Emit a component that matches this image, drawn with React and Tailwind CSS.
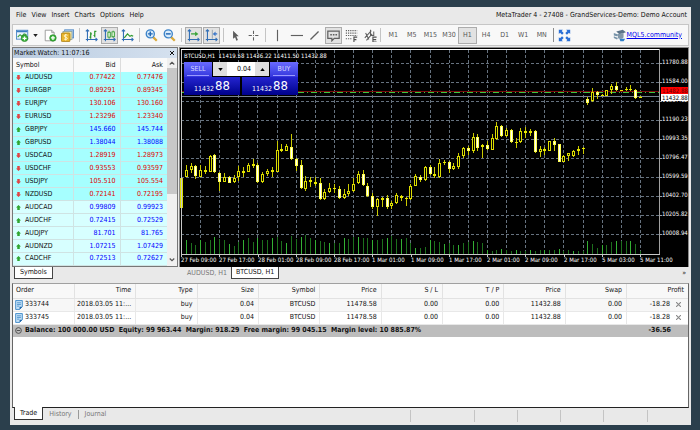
import React, { useState } from 'react';

const menuItems = ['File', 'View', 'Insert', 'Charts', 'Options', 'Help'];
const timeframes = ['M1', 'M5', 'M15', 'M30', 'H1', 'H4', 'D1', 'W1', 'MN'];

// symbol, bid, ask, direction
const quotes = [
  ['AUDUSD', '0.77422', '0.77476', 'down'],
  ['EURGBP', '0.89291', '0.89345', 'down'],
  ['EURJPY', '130.106', '130.160', 'down'],
  ['EURUSD', '1.23296', '1.23340', 'down'],
  ['GBPJPY', '145.660', '145.744', 'up'],
  ['GBPUSD', '1.38044', '1.38088', 'up'],
  ['USDCAD', '1.28919', '1.28973', 'down'],
  ['USDCHF', '0.93553', '0.93597', 'down'],
  ['USDJPY', '105.510', '105.554', 'down'],
  ['NZDUSD', '0.72141', '0.72195', 'down'],
  ['AUDCAD', '0.99809', '0.99923', 'up'],
  ['AUDCHF', '0.72415', '0.72529', 'up'],
  ['AUDJPY', '81.701', '81.765', 'up'],
  ['AUDNZD', '1.07215', '1.07429', 'up'],
  ['CADCHF', '0.72513', '0.72627', 'up'],
];

const orderColumns = ['Order', 'Time', 'Type', 'Size', 'Symbol', 'Price', 'S / L', 'T / P', 'Price', 'Swap', 'Profit'];
const orders = [
  ['333744', '2018.03.05 11:...', 'buy', '0.04', 'BTCUSD', '11478.58', '0.00', '0.00', '11432.88', '0.00', '-18.28'],
  ['333745', '2018.03.05 11:...', 'buy', '0.04', 'BTCUSD', '11478.58', '0.00', '0.00', '11432.88', '0.00', '-18.28'],
];

// high, body top, body bottom, low, 1 = rising
const candles = [
  [178, 178, 208, 208, 1], [165, 170, 177, 177, 1], [163, 166, 170, 173, 1], [165, 166, 176, 179, 0],
  [165, 170, 177, 177, 1], [166, 170, 172, 174, 0], [155, 156, 172, 172, 1], [154, 155, 172, 173, 0],
  [172, 173, 182, 191, 0], [173, 177, 182, 182, 1], [176, 177, 183, 183, 0], [175, 178, 182, 183, 1],
  [166, 171, 177, 181, 1], [167, 171, 173, 177, 0], [163, 165, 172, 172, 1], [159, 164, 166, 168, 1],
  [163, 165, 182, 183, 0], [172, 174, 182, 183, 1], [169, 171, 174, 176, 1], [167, 170, 172, 177, 0],
  [141, 150, 172, 172, 1], [144, 149, 151, 152, 0], [144, 146, 151, 151, 1], [134, 147, 159, 160, 0],
  [158, 159, 166, 171, 0], [160, 165, 188, 189, 0], [176, 181, 189, 191, 1], [177, 180, 182, 187, 0],
  [177, 182, 184, 186, 0], [178, 183, 199, 200, 0], [189, 192, 199, 200, 1], [183, 188, 192, 193, 1],
  [184, 188, 189, 193, 0], [186, 189, 198, 199, 0], [189, 194, 198, 199, 1], [184, 191, 194, 196, 1],
  [178, 184, 191, 192, 1], [171, 174, 183, 184, 1], [170, 174, 185, 186, 0], [183, 186, 196, 197, 0],
  [193, 196, 207, 209, 0], [198, 199, 207, 216, 1], [197, 198, 200, 207, 0], [195, 198, 207, 209, 0],
  [201, 203, 206, 209, 1], [193, 195, 203, 204, 1], [195, 196, 198, 201, 0], [197, 198, 199, 206, 0],
  [184, 186, 199, 200, 1], [174, 176, 186, 186, 1], [175, 177, 180, 182, 0], [166, 167, 180, 181, 1],
  [165, 167, 174, 175, 0], [167, 174, 176, 178, 0], [159, 163, 177, 178, 1], [160, 162, 163, 165, 0],
  [161, 162, 169, 173, 0], [163, 166, 169, 170, 1], [153, 156, 167, 169, 1], [147, 148, 156, 158, 1],
  [146, 148, 151, 155, 0], [133, 137, 151, 153, 1], [134, 137, 148, 151, 0], [144, 145, 147, 158, 1],
  [141, 145, 149, 150, 0], [134, 138, 150, 150, 1], [122, 126, 139, 140, 1], [125, 126, 136, 137, 0],
  [128, 130, 136, 137, 1], [129, 130, 142, 143, 0], [138, 142, 143, 148, 0], [128, 131, 142, 143, 1],
  [127, 131, 133, 138, 0], [129, 131, 133, 136, 1], [130, 131, 152, 153, 0], [146, 149, 152, 157, 1],
  [147, 149, 151, 155, 0], [141, 141, 151, 151, 1], [138, 141, 145, 151, 0], [144, 144, 162, 162, 0],
  [155, 156, 162, 162, 1], [153, 153, 156, 161, 1], [150, 151, 156, 157, 1], [146, 149, 151, 155, 0],
  [147, 148, 149, 154, 0], [97, 99, 103, 105, 0], [88, 92, 101, 102, 1], [91, 92, 95, 99, 0],
  [94, 95, 96, 96, 0], [90, 90, 96, 96, 1], [84, 86, 90, 94, 1], [82, 86, 90, 91, 0],
  [90, 90, 91, 91, 0], [87, 89, 90, 91, 0], [85, 89, 90, 91, 0], [89, 90, 98, 99, 0], [96, 97, 98, 98, 1],
];

const volumes = [
  15, 14, 11, 9, 14, 12, 14, 17, 15, 14, 10, 8, 12, 14, 16, 12, 16, 14, 14, 16, 17, 13, 11, 18, 15, 17, 19, 16, 14, 13,
  12, 11, 11, 11, 16, 15, 17, 17, 16, 16, 14, 14, 15, 16, 18, 15, 15, 16, 11, 6, 6, 7, 14, 13, 12, 10, 11, 9, 9, 11,
  12, 13, 12, 11, 4, 3, 4, 5, 4, 3, 4, 3, 3, 4, 3, 4, 4, 4, 4, 5, 3, 4, 3, 3, 3, 13, 10, 6, 9, 9, 12, 13, 13, 13, 13, 10, 3,
];

const priceLabels = [
  '11780.88', '11584.00', '11387.12', '11190.23', '10993.35',
  '10796.47', '10599.59', '10402.70', '10205.82', '10008.94',
];
const timeLabels = [
  '27 Feb 09:00', '27 Feb 17:00', '28 Feb 01:00', '28 Feb 09:00', '28 Feb 17:00', '1 Mar 01:00', '1 Mar 09:00',
  '1 Mar 17:00', '2 Mar 01:00', '2 Mar 09:00', '2 Mar 17:00', '5 Mar 03:00', '5 Mar 11:00',
];

const candleX = (i) => Math.round(181 + i * 4.78);

// Chart axes drawn in blue under the three chart type icons
const Axes = () => <path d="M3 1v14M1 13h14M1 3l2-2 2 2M13 11l2 2-2 2" fill="none" stroke="#2f6db5" strokeWidth="1.3" />;

const Plus = ({ x, y }) => (
  <g>
    <circle cx={x} cy={y} r="4" fill="#3db53d" stroke="#1c7f1c" strokeWidth=".8" />
    <path d={`M${x - 2.4} ${y}h4.8M${x} ${y - 2.4}v4.8`} stroke="#fff" strokeWidth="1.5" />
  </g>
);

const icons = {
  newChart: (
    <>
      <rect x=".5" y="1.5" width="14" height="11" fill="#eaf4fd" stroke="#3a7cc0" />
      <path d="M1 2h13v2H1z" fill="#3a7cc0" />
      <path d="M2 10l3-3 2 2 3-3 3 1" fill="none" stroke="#3a9d3a" strokeWidth="1.4" />
      <Plus x={10.5} y={11.5} />
    </>
  ),
  newDoc: (
    <>
      <path d="M1.500 1.500h8l3 3v10h-11z" fill="#fff" stroke="#8d8d8d" />
      <path d="M9.500 1.500v3h3" fill="none" stroke="#8d8d8d" />
      <Plus x={11} y={11} />
    </>
  ),
  profiles: (
    <>
      <rect x="4.500" y="1" width="11" height="10" fill="#a9c9ea" stroke="#4d86c4" />
      <rect x="2.500" y="3" width="11" height="10" fill="#f4e7a8" stroke="#8aa0a0" />
      <rect x=".5" y="5" width="10.500" height="10.500" rx="1" fill="#e9b52c" stroke="#a97c10" />
      <path d="M8 7.700c-1-.9-4.200-.8-4.200.9 0 1.800 4 1.200 4 2.900 0 1.600-3 1.700-4.200.7M5.800 6.200v8" fill="none" stroke="#fff6cf" strokeWidth="1.200" />
    </>
  ),
  bars: (
    <>
      <Axes />
      <path d="M7 4v8M5.500 10H7M7 6h1.500M12 2v8M10.500 8H12M12 3h2" stroke="#2f9a2f" strokeWidth="1.500" fill="none" />
    </>
  ),
  candles: (
    <>
      <Axes />
      <path d="M7.500 2v10M12.500 2v9" stroke="#2f9a2f" />
      <rect x="6" y="4" width="3" height="6" fill="#d9f3d0" stroke="#2f9a2f" />
      <rect x="11" y="3.500" width="3" height="6" fill="#d9f3d0" stroke="#2f9a2f" />
    </>
  ),
  line: (
    <>
      <Axes />
      <path d="M4 11l4-5 3 3 2-1 2 1" fill="none" stroke="#2f9a2f" strokeWidth="1.500" />
    </>
  ),
  zoomIn: (
    <>
      <path d="M10 10l4.500 4.500" stroke="#d9a93b" strokeWidth="2.800" />
      <circle cx="6.500" cy="6" r="5" fill="#d9ecfb" stroke="#3b82c8" strokeWidth="1.600" />
      <path d="M3.500 6h6M6.500 3v6" stroke="#2468b5" strokeWidth="1.800" />
    </>
  ),
  zoomOut: (
    <>
      <path d="M10 10l4.500 4.500" stroke="#d9a93b" strokeWidth="2.800" />
      <circle cx="6.500" cy="6" r="5" fill="#d9ecfb" stroke="#3b82c8" strokeWidth="1.600" />
      <path d="M3.500 6h6" stroke="#2468b5" strokeWidth="1.800" />
    </>
  ),
  autoScroll: (
    <>
      <Axes />
      <path d="M5 6h7" stroke="#3aa33a" strokeWidth="1.600" />
      <path d="M10 3l4 3-4 3z" fill="#3aa33a" />
    </>
  ),
  chartShift: (
    <>
      <Axes />
      <path d="M9 1v11" stroke="#8a99a8" />
      <path d="M11 6h4" stroke="#3d78c9" strokeWidth="1.600" />
      <path d="M13 3L9.500 6l3.500 3z" fill="#3d78c9" />
    </>
  ),
  cursor: <path d="M5 2l7 7H9l2 4.500-2 1L7.500 10 5 12z" fill="#5d5d5d" />,
  cross: <path d="M8 2v4M8 10v4M2 8h4M10 8h4M7.500 8h1" stroke="#606060" strokeWidth="1.300" />,
  vline: <path d="M8 1v14" stroke="#606060" strokeWidth="1.400" />,
  hline: <path d="M1 8h15" stroke="#606060" strokeWidth="1.400" />,
  slash: <path d="M3 13L13 3" stroke="#606060" strokeWidth="1.600" />,
  comment: (
    <>
      <path d="M1 2.500h14v9H9l-3 3v-3H1z" fill="none" stroke="#606060" strokeWidth="1.500" />
      <path d="M4 7h2M7.200 7h2M10.400 7h2" stroke="#606060" strokeWidth="1.800" />
    </>
  ),
  fibo: (
    <>
      <path d="M1 2h14M1 5h14M1 8h14M1 12h8" stroke="#606060" strokeWidth="1.500" strokeDasharray="1.500 1.200" />
      <path d="M11 16v-6h4M11 13h3" fill="none" stroke="#505050" strokeWidth="1.400" />
    </>
  ),
  equi: (
    <>
      <path d="M1 11l8-9M3 14l7-8M2 5l4 8M8 1v7h4V3" fill="none" stroke="#606060" strokeWidth="1.300" />
      <path d="M15.500 10H11v6h4.500M11 13h4" fill="none" stroke="#505050" strokeWidth="1.400" />
    </>
  ),
  full: (
    <path
      d="M1 1h5L4.500 2.500 7 5 5 7 2.500 4.500 1 6zM15 1v5l-1.500-1.500L11 7 9 5l2.500-2.500L10 1zM1 15v-5l1.500 1.500L5 9l2 2-2.500 2.500L6 15zM15 15h-5l1.500-1.500L9 11l2-2 2.500 2.500L15 10z"
      fill="#2a6fd6"
    />
  ),
  community: (
    <>
      <path d="M4 3l8-2 4 3-8 2.500z" fill="#5b7388" />
      <path d="M6 6v5c2 2 6 1 7-1V5z" fill="#8297a8" />
      <path d="M1 5l6 2-2 2-4-1zM1 9l5 2-1 2-4-2z" fill="#7793a9" />
      <path d="M8 12h7l-2 3H9z" fill="#2f7ec7" />
    </>
  ),
};

const Icon = ({ name }) => (
  <svg viewBox="0 0 16 16" className="h-[13px] w-[13px] shrink-0" aria-hidden="true">{icons[name]}</svg>
);

const ToolButton = ({ name, label, active }) => (
  <button
    type="button"
    aria-label={label}
    className={`flex h-[17px] w-[17px] shrink-0 items-center justify-center border ${active ? 'border-[#acacac] bg-[#e2e2e2]' : 'border-transparent'}`}
  >
    <Icon name={name} />
  </button>
);

const Separator = () => <span className="mx-[3px] h-[14px] w-px shrink-0 bg-[#c4c4c4]" />;

const Toolbar = () => {
  const [frame, setFrame] = useState('H1');

  return (
    <div className="mx-[2px] flex h-[22px] items-center border border-[#c6c6c6] bg-[#f8f8f8] pl-px">
      <ToolButton name="newChart" label="New chart" />
      <button type="button" aria-label="Chart list" className="mr-[3px] flex h-[17px] w-[8px] items-center justify-center">
        <svg viewBox="0 0 6 4" className="h-[3px] w-[5px]"><path d="M0 0h6L3 4z" fill="#222" /></svg>
      </button>
      <ToolButton name="newDoc" label="New order" />
      <ToolButton name="profiles" label="Profiles" />
      <Separator />
      <div className="flex gap-px">
        <ToolButton name="bars" label="Bar chart" />
        <ToolButton name="candles" label="Candlesticks" active />
        <ToolButton name="line" label="Line chart" />
      </div>
      <Separator />
      <div className="flex gap-px">
        <ToolButton name="zoomIn" label="Zoom in" />
        <ToolButton name="zoomOut" label="Zoom out" />
      </div>
      <Separator />
      <div className="flex gap-px">
        <ToolButton name="autoScroll" label="Auto scroll" active />
        <ToolButton name="chartShift" label="Chart shift" active />
      </div>
      <Separator />
      <div className="flex gap-px">
        <ToolButton name="cursor" label="Cursor" />
        <ToolButton name="cross" label="Crosshair" />
      </div>
      <Separator />
      <div className="grid w-[111px] grid-cols-6">
        <ToolButton name="vline" label="Vertical line" />
        <ToolButton name="hline" label="Horizontal line" />
        <ToolButton name="slash" label="Trendline" />
        <ToolButton name="comment" label="Comments" active />
        <ToolButton name="fibo" label="Fibonacci" />
        <ToolButton name="equi" label="Channel" />
      </div>
      <span className="mr-[3px] h-[14px] w-px shrink-0 bg-[#c4c4c4]" />
      <div className="grid w-[167px] grid-cols-9">
        {timeframes.map((t) => (
          <button
            key={t}
            type="button"
            onClick={() => setFrame(t)}
            className={`h-[17px] border text-center text-[7px] text-[#555] ${frame === t ? 'border-[#acacac] bg-[#e2e2e2]' : 'border-transparent'}`}
          >
            {t}
          </button>
        ))}
      </div>
      <span className="mx-[2px] h-[14px] w-px shrink-0 bg-[#8c8c8c]" />
      <ToolButton name="full" label="Full screen" />
      <a href="#community" className="mr-[6px] ml-auto flex items-center gap-px whitespace-nowrap text-[#0000ee] underline">
        <Icon name="community" />
        MQL5.community
      </a>
    </div>
  );
};

const Arrow = ({ dir }) => (
  <svg viewBox="0 0 8 8" className="h-[5px] w-[5px] shrink-0">
    {dir === 'up'
      ? <path d="M4 0l4 4H6v4H2V4H0z" fill="#2fa52f" />
      : <path d="M4 8L0 4h2V0h4v4h2z" fill="#e04444" />}
  </svg>
);

const MarketWatch = () => (
  <section className="w-[166px] shrink-0">
    <div className="border border-[#777] bg-white">
      <div className="flex h-[10px] items-center justify-between bg-linear-to-r from-[#b9cbe0] to-[#d5e1ef] pr-[2px] pl-px">
        <span>Market Watch: 11:07:16</span>
        <button type="button" aria-label="Close" className="flex h-[8px] w-[5px] items-center">
          <svg viewBox="0 0 6 6" className="h-[4px] w-[4px]"><path d="M0 0l6 6M6 0L0 6" stroke="#111" strokeWidth="1.500" /></svg>
        </button>
      </div>
      <div className="flex">
        <table className="h-[208px] flex-1 table-fixed border-collapse">
          <thead>
            <tr className="h-[14px] bg-[#fafafa]">
              <th className="w-[60px] border-r border-[#dcdcdc] pl-[3px] text-left font-normal">Symbol</th>
              <th className="w-[47px] border-r border-[#dcdcdc] pr-[4px] text-right font-normal">Bid</th>
              <th className="pr-[4px] text-right font-normal">Ask</th>
            </tr>
          </thead>
          <tbody>
            {quotes.map(([symbol, bid, ask, dir], i) => (
              <tr key={symbol} className={`border-b border-[#cfe3e3] ${i < 10 ? 'bg-[#a6ffff]' : 'bg-[#d7ffff]'}`}>
                <td className="border-r border-[#cfe3e3] p-0 pl-[3px]">
                  <span className="flex items-center gap-[4px]"><Arrow dir={dir} />{symbol}</span>
                </td>
                <td className={`border-r border-[#cfe3e3] p-0 pr-[4px] text-right ${dir === 'up' ? 'text-[#0000ff]' : 'text-[#e00000]'}`}>{bid}</td>
                <td className={`p-0 pr-[4px] text-right ${dir === 'up' ? 'text-[#0000ff]' : 'text-[#e00000]'}`}>{ask}</td>
              </tr>
            ))}
          </tbody>
        </table>
        <div className="flex w-[10px] flex-col items-center bg-[#f0f0f0]">
          <svg viewBox="0 0 8 8" className="my-[2px] h-[6px] w-[6px]"><path d="M1 6l3-3 3 3" fill="none" stroke="#555" strokeWidth="1.500" /></svg>
          <span className="h-[126px] w-full bg-[#c8c8c8]" />
          <svg viewBox="0 0 8 8" className="mt-auto mb-[3px] h-[6px] w-[6px]"><path d="M1 2l3 3 3-3" fill="none" stroke="#555" strokeWidth="1.500" /></svg>
        </div>
      </div>
    </div>
    <button type="button" className="ml-[2px] block h-[12px] border border-t-0 border-[#444] bg-white px-[5px]">Symbols</button>
  </section>
);

const PriceChart = () => (
  <svg viewBox="179 47 510 220" className="block w-full" shapeRendering="crispEdges">
    <rect x="179" y="47" width="510" height="220" fill="#8a8a8a" />
    <rect x="180" y="48" width="508" height="219" fill="#000" />
    <g stroke="#66727f" strokeWidth="1" strokeDasharray="3 2">
      {priceLabels.map((p, i) => <path key={p} d={`M181 ${63.5 + i * 19}H659`} />)}
      {Array.from({ length: 24 }, (_, i) => {
        const x = Math.round(200 + i * 19.13) + 0.5;
        return <path key={x} d={`M${x} 50V254`} />;
      })}
    </g>
    {volumes.map((v, i) => (
      <rect key={i} x={candleX(i)} y={254 - v} width="1" height={v} fill={i % 3 === 1 ? '#34b034' : '#1d701d'} />
    ))}
    <path d="M181 91.500H659" stroke="#7a0c0c" />
    <path d="M181 92.500H659" stroke="#3fc43f" strokeDasharray="6 3 1 3" />
    <path d="M181 96.500H659" stroke="#78838f" />
    {candles.map(([high, top, bottom, low, rising], i) => {
      const x = candleX(i);
      const h = bottom - top;
      return (
        <g key={i}>
          <rect x={x} y={high} width="1" height={low - high} fill="#c9c900" />
          {h < 3 && <rect x={x - 1} y={top} width="3" height={h} fill="#e6e600" />}
          {h >= 3 && (
            <rect
              x={x - 0.5}
              y={top + 0.5}
              width="2"
              height={h - 1}
              fill={rising ? '#000' : '#fff'}
              stroke={rising ? '#dcdc00' : '#ffff50'}
            />
          )}
        </g>
      );
    })}
    <path d="M181 49.500H659.500" stroke="#fff" />
    <path d="M659.500 49V254.500" stroke="#a0a0a0" />
    <path d="M181 254.500H660M181.500 50V254" stroke="#c8c8c8" />
    <g fill="#fff" className="text-[6px]">
      {priceLabels.map((p, i) => (
        <g key={p}>
          <path d={`M659 ${63.5 + i * 19}h3`} stroke="#a0a0a0" />
          <text x="662" y={64 + i * 19}>{p}</text>
        </g>
      ))}
      {timeLabels.map((t, i) => {
        const x = Math.round(181 + i * 38.26);
        return (
          <g key={t}>
            <path d={`M${x + 0.5} 254v3`} stroke="#c8c8c8" />
            <text x={x} y="262">{t}</text>
          </g>
        );
      })}
      <text x="184" y="58">BTCUSD,H1&nbsp; 11419.58 11436.22 11411.50 11432.88</text>
    </g>
    <g className="text-[6px]">
      <rect x="661" y="87" width="27" height="7" fill="#f00" />
      <text x="662" y="93" fill="#600">11482.88</text>
      <rect x="661" y="94" width="27" height="7" fill="#fff" />
      <text x="662" y="100">11432.88</text>
    </g>
  </svg>
);

const QuoteButton = ({ label }) => (
  <button type="button" className="flex h-[18px] flex-1 items-end justify-center gap-px bg-linear-to-b from-[#2424d0] to-[#00008c] pb-px text-white" aria-label={label}>
    <span className="pb-px text-[7px] leading-[8px]">11432</span>
    <span className="text-[13px] leading-[16px]">88</span>
  </button>
);

const OneClick = () => {
  const [lots, setLots] = useState('0.04');

  return (
    <div className="absolute top-[15px] left-[5px] w-[114px] bg-black">
      <div className="flex h-[15px] gap-px">
        <button type="button" className="flex-1 bg-linear-to-b from-[#6a6aff] to-[#3434dc] text-[7px] text-[#dcdcff]">
          <span className="mx-[3px] block border-b border-[#9a9aff] leading-[12px]">SELL</span>
        </button>
        <div className="flex h-[14px] w-[56px]">
          <button type="button" aria-label="Less" className="flex w-[14px] items-center justify-center bg-[#dedede]">
            <svg viewBox="0 0 6 4" className="h-[3px] w-[5px]"><path d="M0 0h6L3 4z" fill="#000" /></svg>
          </button>
          <input
            aria-label="Volume"
            value={lots}
            onChange={(e) => setLots(e.target.value)}
            className="w-[28px] bg-white pr-[4px] text-right text-[7px] text-black"
          />
          <button type="button" aria-label="More" className="flex w-[14px] items-center justify-center bg-[#dedede]">
            <svg viewBox="0 0 6 4" className="h-[3px] w-[5px]"><path d="M0 4h6L3 0z" fill="#000" /></svg>
          </button>
        </div>
        <button type="button" className="flex-1 bg-linear-to-b from-[#6a6aff] to-[#3434dc] text-[7px] text-[#dcdcff]">
          <span className="mx-[3px] block border-b border-[#9a9aff] leading-[12px]">BUY</span>
        </button>
      </div>
      <div className="flex gap-[2px]">
        <QuoteButton label="Sell at 11432.88" />
        <QuoteButton label="Buy at 11432.88" />
      </div>
    </div>
  );
};

const Terminal = () => (
  <section className="flex flex-1 flex-col">
    <div className="mx-[2px] flex-1 border border-b-[#222] border-l-[#666] border-r-[#666] border-t-[#a0a0a0] bg-white">
      <table className="w-full table-fixed border-collapse">
        <thead>
          <tr className="h-[14px] bg-[#f8f8f8]">
            {orderColumns.map((c, i) => (
              <th key={i} className={`border-b border-[#e2e2e2] p-0 font-normal ${i === 0 ? 'pl-[3px] text-left' : 'pr-[4px] text-right'} ${i < 10 ? 'border-r' : ''}`}>{c}</th>
            ))}
          </tr>
        </thead>
        <tbody>
          {orders.map((row, r) => (
            <tr key={row[0]} className={`h-[13px] ${r === 0 ? 'bg-[#f7f7f7]' : 'bg-white'}`}>
              {row.map((cell, i) => (
                <td key={i} className={`border-b border-[#e8e8e8] p-0 whitespace-nowrap ${i === 0 ? 'pl-[2px] text-left' : 'pr-[4px] text-right'} ${i < 10 ? 'border-r' : ''}`}>
                  {i === 0 && (
                    <span className="flex items-center gap-[2px]">
                      <svg viewBox="0 0 14 18" className="h-[10px] w-[8px]">
                        <path d="M1 1h12v11l-5 5H1z" fill="#c4e0f6" stroke="#2f80c4" strokeWidth="1.500" />
                        <path d="M3.500 5h7M3.500 8h7M3.500 11h4" stroke="#2f80c4" strokeWidth="1.300" />
                        <path d="M13 12H8v5z" fill="#1f66a8" />
                      </svg>
                      {cell}
                    </span>
                  )}
                  {i > 0 && i < 10 && cell}
                  {i === 10 && (
                    <span className="flex items-center justify-end gap-[6px] pr-[3px]">
                      {cell}
                      <button type="button" aria-label="Close order" className="flex">
                        <svg viewBox="0 0 6 6" className="h-[5px] w-[5px]"><path d="M0 0l6 6M6 0L0 6" stroke="#888" strokeWidth="1.300" /></svg>
                      </button>
                    </span>
                  )}
                </td>
              ))}
            </tr>
          ))}
          <tr className="h-[13px] bg-[#bdbdbd] font-bold">
            <td colSpan={10} className="p-0 pl-[2px]">
              <span className="flex items-center gap-[3px] whitespace-pre">
                <svg viewBox="0 0 8 8" className="h-[7px] w-[7px]"><circle cx="4" cy="4" r="3.300" fill="none" stroke="#444" /><path d="M2 4h4" stroke="#444" /></svg>
                {'Balance: 100 000.00 USD  Equity: 99 963.44  Margin: 918.29  Free margin: 99 045.15  Margin level: 10 885.87%'}
              </span>
            </td>
            <td className="p-0 pr-[17px] text-right">-36.56</td>
          </tr>
        </tbody>
      </table>
    </div>
    <footer className="flex h-[17px] items-start pr-[43px] pl-[4px]">
      <button type="button" className="-mt-px h-[13px] border border-t-0 border-[#333] bg-white px-[5px]">Trade</button>
      <button type="button" className="h-[13px] px-[6px] text-[#777]">History</button>
      <span className="mt-[2px] h-[9px] w-px bg-[#999]" />
      <button type="button" className="h-[13px] px-[6px] text-[#777]">Journal</button>
      <div className="mt-[2px] ml-auto flex h-[12px]">
        <span className="w-[64px] border-l border-[#c4c4c4]" />
        <span className="w-[43px] border-l border-[#c4c4c4]" />
        <span className="w-[43px] border-l border-[#c4c4c4]" />
        <span className="w-[43px] border-l border-[#c4c4c4]" />
        <span className="w-[45px] border-x border-[#c4c4c4]" />
      </div>
    </footer>
  </section>
);

const App = () => (
  <div className="flex min-h-screen flex-col bg-[#2b3f4c] pt-[7px] pr-[9px] pb-[5px] pl-[10px] font-['DejaVu_Sans_Condensed','DejaVu_Sans',sans-serif] text-[7px] leading-[9px] text-[#111]">
    <main className="flex flex-1 flex-col bg-[#e9e9e9]">
      <header className="flex h-[17px] items-center justify-between pr-[4px] pl-[6px]">
        <nav className="flex gap-[5px]">
          {menuItems.map((m) => <button key={m} type="button">{m}</button>)}
        </nav>
        <span>MetaTrader 4 - 27408 - GrandServices-Demo: Demo Account</span>
      </header>

      <Toolbar />

      <div className="mx-[2px] mt-px flex gap-px">
        <MarketWatch />
        <section className="flex-1">
          <div className="relative">
            <PriceChart />
            <OneClick />
          </div>
          <div className="flex h-[16px] items-start pr-[3px] pl-[5px]">
            <button type="button" className="h-[13px] px-[3px] text-[#777]">AUDUSD, H1</button>
            <button type="button" className="ml-px h-[12px] border border-t-0 border-[#444] bg-white px-[4px]">BTCUSD, H1</button>
            <span className="mt-[2px] ml-auto">»</span>
          </div>
        </section>
      </div>

      <Terminal />
    </main>
  </div>
);

export default App;
